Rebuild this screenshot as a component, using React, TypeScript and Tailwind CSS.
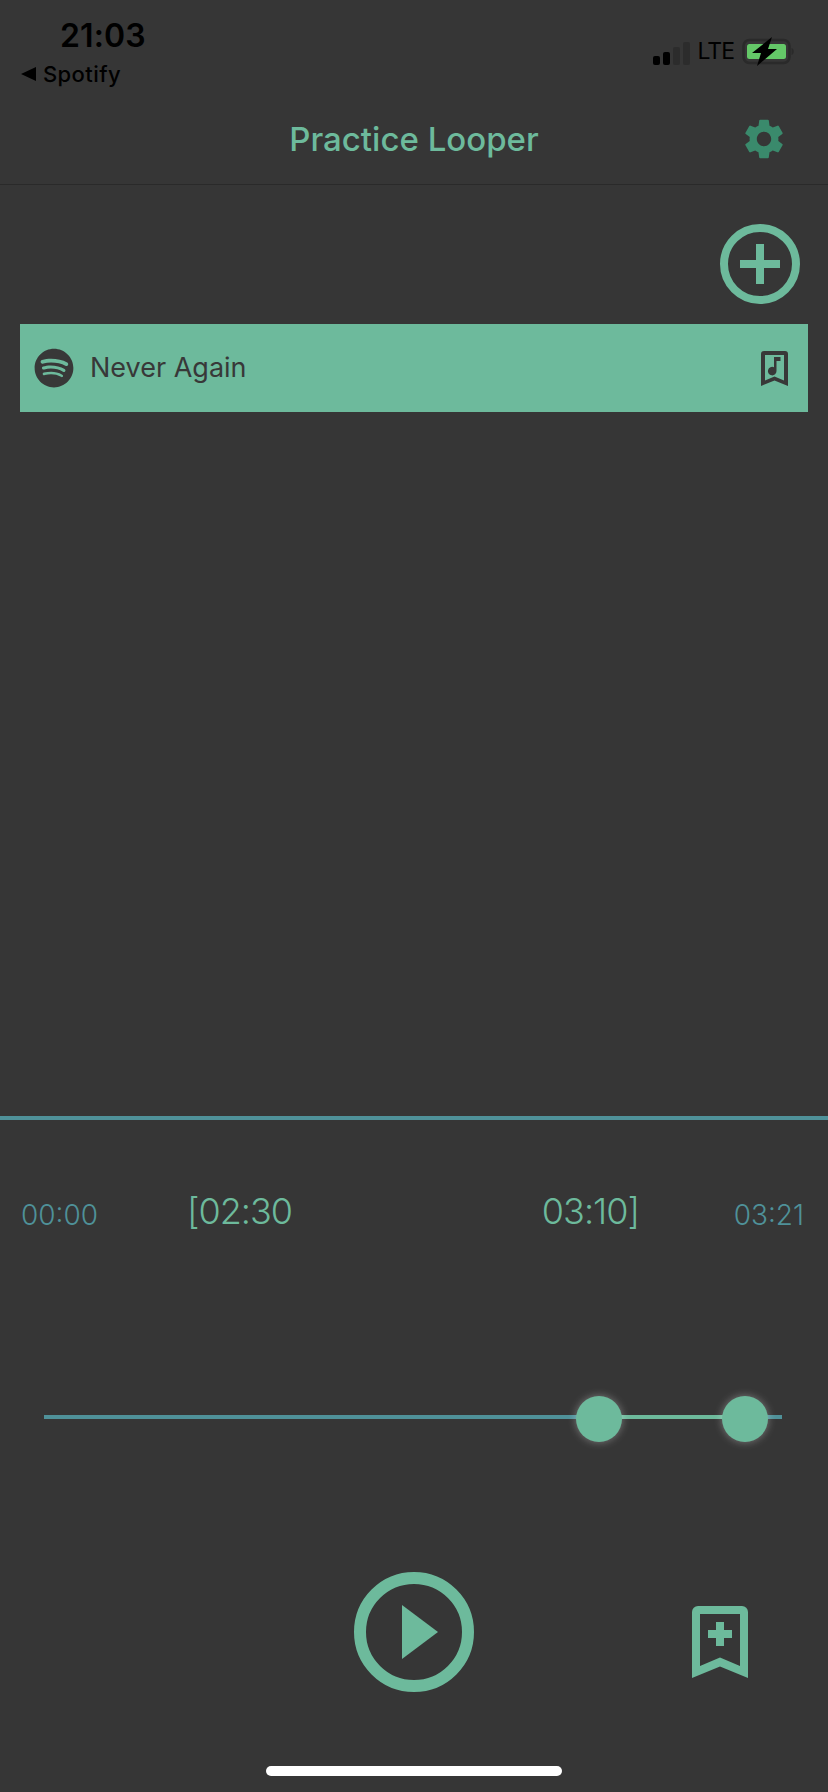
import { FaSpotify } from "react-icons/fa";
import { MdSettings } from "react-icons/md";

const font = { fontFamily: "Inter, sans-serif" };

const StatusBar = () => (
  <div className="flex h-[96px] items-start justify-between">
    <div className="flex flex-col text-black">
      <span className="ml-[60px] mt-[17px] text-[32px] leading-[38px] font-semibold tracking-[0.1px]">21:03</span>
      <div className="ml-[21px] mt-[6px] flex items-center gap-[7px]">
        <svg width="15" height="14" viewBox="0 0 15 14">
          <path d="M0 7 L15 0 V14 Z" fill="#000" />
        </svg>
        <span className="text-[22px] leading-[26px] font-medium tracking-[0.4px]">Spotify</span>
      </div>
    </div>
    <div className="mr-[33px] mt-[37px] flex items-center">
      <div className="flex items-end gap-[3px] self-end pb-[1px]">
        <div className="h-[9px] w-[7px] rounded-[2px] bg-black" />
        <div className="h-[13px] w-[7px] rounded-[2px] bg-black" />
        <div className="h-[18px] w-[7px] rounded-[2px] bg-[#2c2c2c]" />
        <div className="h-[23px] w-[7px] rounded-[2px] bg-[#2c2c2c]" />
      </div>
      <span className="ml-[8px] text-[23px] leading-[25px] tracking-[-1px] text-black">LTE</span>
      <svg className="ml-[8px]" width="53" height="29" viewBox="0 0 53 29">
        <rect x="1.5" y="3" width="46" height="23" rx="6" fill="none" stroke="#2a2a2a" strokeWidth="2.5" />
        <rect x="5" y="7" width="39" height="15" rx="2.5" fill="#64c868" />
        <path d="M49.5 11 C52.5 11.5 52.5 17.5 49.5 18 Z" fill="#2a2a2a" />
        <path d="M30 0 L10 16 H19 L15 29 L35 12 H26 Z" fill="#000" />
      </svg>
    </div>
  </div>
);

const AddIcon = () => (
  <svg width="80" height="80" viewBox="0 0 80 80" fill="none" stroke="#6dba9c">
    <circle cx="40" cy="40" r="36" strokeWidth="8" />
    <path d="M40 20 V60 M20 40 H60" strokeWidth="8" />
  </svg>
);

const BookmarkMusic = () => (
  <svg width="27" height="35" viewBox="0 0 27 35">
    <path
      d="M3 0 H24 A3 3 0 0 1 27 3 V35 L13.5 29.5 L0 35 V3 A3 3 0 0 1 3 0 Z M4 4 V29.5 L13.5 25.5 L23 29.5 V4 Z"
      fill="#383838"
      fillRule="evenodd"
    />
    <path d="M13 6 H19.5 V10 H15.5 V20 A4.3 4.3 0 1 1 13 16.2 Z" fill="#383838" />
  </svg>
);

const BookmarkPlus = () => (
  <svg width="56" height="72" viewBox="0 0 56 72">
    <path
      d="M6 0 H50 A6 6 0 0 1 56 6 V72 L28 60.5 L0 72 V6 A6 6 0 0 1 6 0 Z M8 8 V60 L28 51.5 L48 60 V8 Z"
      fill="#6dba9c"
      fillRule="evenodd"
    />
    <path d="M24 16 H32 V24 H40 V32 H32 V40 H24 V32 H16 V24 H24 Z" fill="#6dba9c" />
  </svg>
);

const PlayIcon = () => (
  <svg width="120" height="120" viewBox="0 0 120 120">
    <circle cx="60" cy="60" r="54" fill="none" stroke="#6dba9c" strokeWidth="12" />
    <path d="M48 33 L84 60 L48 87 Z" fill="#6dba9c" />
  </svg>
);

const Thumb = ({ className }: { className: string }) => (
  <div
    className={`absolute top-[-19px] h-[46px] w-[46px] rounded-full bg-[#6dba9c] shadow-[0_0_8px_rgba(255,255,255,0.35)] ${className}`}
  />
);

export default function App() {
  return (
    <div className="flex h-[1792px] w-[828px] flex-col overflow-hidden bg-[#363636]" style={font}>
      <header className="h-[185px] border-b border-[#2a2a2a]">
        <StatusBar />
        <div className="relative flex h-[88px] items-center justify-center">
          <h1 className="text-[33px] font-medium text-[#6dba9c]">Practice Looper</h1>
          <MdSettings className="absolute right-[40px] top-[19px] text-[#3a8a6c]" size={48} />
        </div>
      </header>

      <main className="flex-1 px-[20px]">
        <div className="flex justify-end pr-[8px] pt-[39px]">
          <AddIcon />
        </div>
        <div className="mt-[20px] flex h-[88px] items-center bg-[#6dba9c] pl-[14px] pr-[20px]">
          <FaSpotify className="text-[#383838]" size={40} />
          <span className="ml-[16px] flex-1 text-[27px] text-[#383838]">Never Again</span>
          <BookmarkMusic />
        </div>
      </main>

      <section className="h-[676px] border-t-4 border-[#4f9199]">
        <div className="flex h-[112px] items-end pl-[21px] pr-[24px] font-light">
          <span className="w-[166px] text-[28px] leading-[34px] text-[#4f9199]">00:00</span>
          <div className="flex w-[452px] justify-between text-[36px] leading-[41px] tracking-[-1px] text-[#6dba9c]">
            <span>[02:30</span>
            <span>03:10]</span>
          </div>
          <span className="ml-auto text-[28px] leading-[34px] text-[#4f9199]">03:21</span>
        </div>

        <div className="relative ml-[44px] mt-[183px] h-[4px] w-[738px] bg-[#4f9199]">
          <div className="ml-[555px] h-full w-[146px] bg-[#6dba9c]" />
          <Thumb className="left-[532px]" />
          <Thumb className="left-[678px]" />
        </div>

        <div className="relative mt-[153px] flex justify-center">
          <PlayIcon />
          <div className="absolute left-[692px] top-[34px]">
            <BookmarkPlus />
          </div>
        </div>

        <div className="mx-auto mt-[74px] h-[10px] w-[296px] rounded-full bg-white" />
      </section>
    </div>
  );
}
